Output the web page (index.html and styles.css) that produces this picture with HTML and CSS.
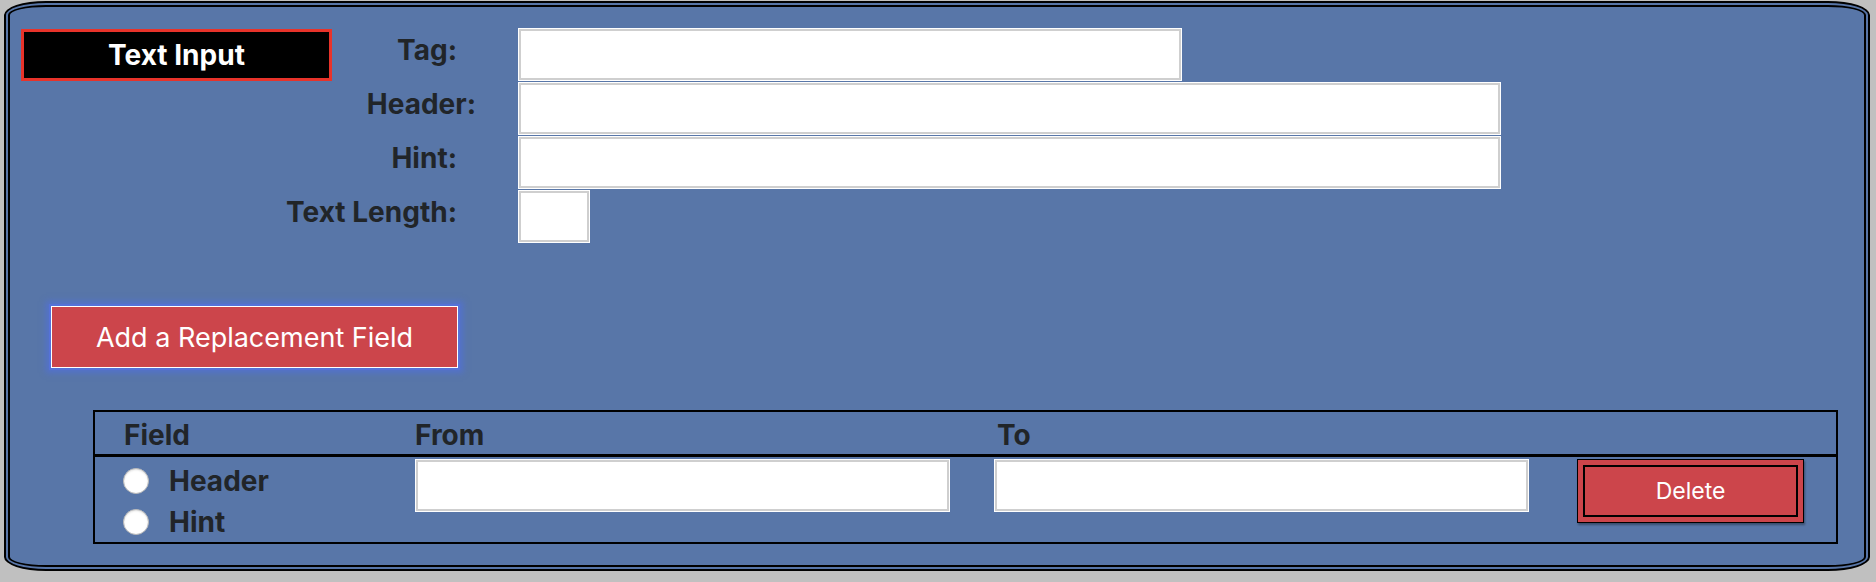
FILE: index.html
```html
<!DOCTYPE html>
<html lang="en">
<head>
<meta charset="utf-8">
<title>Text Input</title>
<link rel="stylesheet" href="styles.css">
</head>
<body>
<div class="panel">
  <div class="form-grid">
    <div class="title">Text Input</div>
    <label class="label label-tag">Tag:</label>
    <input class="field field-tag" type="text">
    <label class="label label-header">Header:</label>
    <input class="field field-wide" type="text">
    <label class="label label-wide">Hint:</label>
    <input class="field field-wide" type="text">
    <label class="label label-wide">Text Length:</label>
    <input class="field field-short" type="text">
  </div>

  <div class="add-row">
    <button class="add-btn" type="button">Add a Replacement Field</button>
  </div>

  <div class="repl-table">
    <div class="th th-field">Field</div>
    <div class="th th-from">From</div>
    <div class="th th-to">To</div>
    <div class="th"></div>

    <div class="td td-field">
      <label class="radio-row"><input type="radio" name="f1" class="radio"><span>Header</span></label>
      <label class="radio-row"><input type="radio" name="f1" class="radio"><span>Hint</span></label>
    </div>
    <div class="td"><input class="field cell-input" type="text"></div>
    <div class="td"><input class="field cell-input" type="text"></div>
    <div class="td"><button class="del-btn" type="button">Delete</button></div>
  </div>
</div>
</body>
</html>
```

FILE: styles.css
```css
html, body {
  margin: 0;
  padding: 0;
}
body {
  background: #c0c0c0;
  font-family: Inter, "Noto Sans", "Liberation Sans", sans-serif;
  color: #212529;
  width: 1876px;
  height: 582px;
  overflow: hidden;
}
.panel {
  box-sizing: border-box;
  margin: 1px 6px 0 4px;
  height: 570px;
  background: #5876a8;
  border: 6px double #000;
  border-radius: 42px / 14px;
  padding: 21px 26px 0 11px;
}

/* top form */
.form-grid {
  display: grid;
  grid-template-columns: 311px 186px 1fr;
  grid-auto-rows: 52px;
  row-gap: 2px;
  align-items: center;
}
.title {
  grid-column: 1;
  grid-row: 1;
  box-sizing: border-box;
  height: 52px;
  background: #000;
  border: 3px solid #e8332a;
  color: #fff;
  font-weight: 700;
  font-size: 28px;
  display: flex;
  align-items: center;
  justify-content: center;
  margin-top: 1px;
}
.label {
  font-weight: 700;
  font-size: 28px;
  text-align: right;
  padding-right: 61px;
  padding-bottom: 8px;
  white-space: nowrap;
}
.label-tag {
  grid-column: 2;
}
.label-header {
  grid-column: 1 / 3;
  padding-right: 42px;
}
.label-wide {
  grid-column: 1 / 3;
}
.field {
  box-sizing: border-box;
  height: 53px;
  background: #fff;
  border: 1px solid #fff;
  box-shadow: inset 0 0 0 2px #cfcfcf;
  outline: none;
  padding: 0 8px;
  font: inherit;
  margin: 0;
}
.form-grid .field {
  grid-column: 3;
}
.field-tag {
  width: 664px;
}
.field-wide {
  width: 983px;
}
.field-short {
  width: 72px;
}

/* add button */
.add-row {
  margin-top: 64px;
  padding-left: 30px;
}
.add-btn {
  box-sizing: border-box;
  width: 407px;
  height: 62px;
  background: #cc454b;
  color: #fff;
  border: 1.5px solid #fff;
  font-family: inherit;
  font-size: 27px;
  font-weight: 400;
  box-shadow: 0 0 0 2px #5572d8, 0 0 6px 5px rgba(82, 112, 216, 0.75);
  cursor: pointer;
}

/* replacement table */
.repl-table {
  margin-top: 42px;
  margin-left: 72px;
  border: 2px solid #000;
  display: grid;
  grid-template-columns: 320px 579px 583px 1fr;
}
.th {
  box-sizing: border-box;
  height: 45px;
  border-bottom: 3px solid #000;
  font-weight: 700;
  font-size: 28px;
  display: flex;
  align-items: center;
  padding-top: 3px;
}
.th-field {
  padding-left: 29px;
}
.th-to {
  padding-left: 3px;
}
.td {
  height: 85px;
  padding-top: 2px;
  box-sizing: border-box;
}
.td-field {
  padding-left: 28px;
  padding-top: 3px;
  display: flex;
  flex-direction: column;
}
.radio-row {
  display: flex;
  align-items: center;
  gap: 20px;
  height: 42px;
  font-weight: 700;
  font-size: 28px;
}
.radio {
  appearance: none;
  -webkit-appearance: none;
  margin: 0;
  width: 26px;
  height: 26px;
  border-radius: 50%;
  background: #fff;
  border: 1px solid #b8b8b8;
  box-shadow: inset 0 1px 2px rgba(0,0,0,0.12);
}
.cell-input {
  width: 535px;
}
.del-btn {
  box-sizing: border-box;
  width: 227px;
  height: 64px;
  background: #cc454b;
  color: #fff;
  font-family: inherit;
  font-size: 23px;
  border: 1.5px solid #000;
  box-shadow: inset 0 0 0 5px #cc454b, inset 0 0 0 7px #000, 1px 2px 2px rgba(0,0,0,0.35);
  cursor: pointer;
}
```
